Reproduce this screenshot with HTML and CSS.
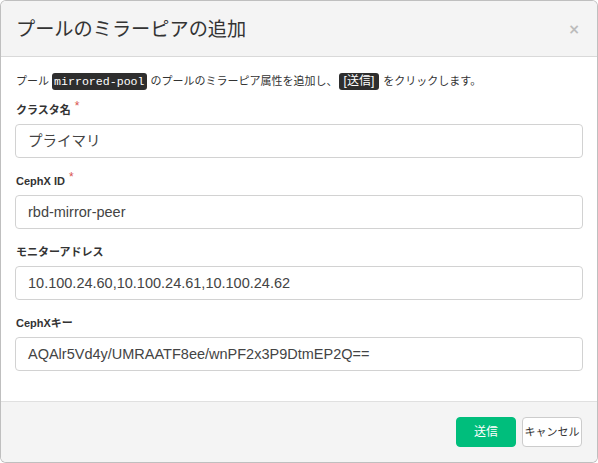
FILE: index.html
```html
<!DOCTYPE html>
<html lang="ja">
<head>
<meta charset="utf-8">
<title>プールのミラーピアの追加</title>
<link rel="stylesheet" href="styles.css">
</head>
<body>
<div class="modal">
  <div class="modal-header">
    <h4 class="modal-title">プールのミラーピアの追加</h4>
    <button class="close" type="button" aria-label="Close">×</button>
  </div>
  <div class="modal-body">
    <p class="intro">プール <kbd class="code">mirrored-pool</kbd> のプールのミラーピア属性を追加し、<kbd class="kbd">[送信]</kbd> をクリックします。</p>
    <div class="group">
      <label class="label">クラスタ名<span class="req">*</span></label>
      <div class="input">プライマリ</div>
    </div>
    <div class="group">
      <label class="label">CephX ID<span class="req">*</span></label>
      <div class="input">rbd-mirror-peer</div>
    </div>
    <div class="group">
      <label class="label">モニターアドレス</label>
      <div class="input">10.100.24.60,10.100.24.61,10.100.24.62</div>
    </div>
    <div class="group">
      <label class="label">CephXキー</label>
      <div class="input">AQAlr5Vd4y/UMRAATF8ee/wnPF2x3P9DtmEP2Q==</div>
    </div>
  </div>
  <div class="modal-footer">
    <button class="btn btn-primary" type="button">送信</button>
    <button class="btn btn-default" type="button">キャンセル</button>
  </div>
</div>
</body>
</html>
```

FILE: styles.css
```css
* { box-sizing: border-box; }
html, body { margin: 0; padding: 0; background: #fff; }
body {
  font-family: "Liberation Sans", "Noto Sans CJK JP", sans-serif;
  color: #333;
  width: 598px;
  height: 463px;
  overflow: hidden;
}
.modal {
  width: 598px;
  height: 463px;
  border: 1px solid rgba(0,0,0,0.25);
  border-radius: 6px;
  overflow: hidden;
  display: flex;
  flex-direction: column;
  background: #fff;
}
.modal-header {
  height: 56px;
  flex: none;
  background: #f4f4f4;
  border-bottom: 1px solid #d9d9d9;
  display: flex;
  align-items: center;
  justify-content: space-between;
  padding: 0 14px 0 15px;
}
.modal-title {
  margin: 0;
  font-weight: normal;
  font-size: 19.2px;
  line-height: 24px;
  color: #333;
  position: relative;
  top: 1px;
}
.close {
  border: 0;
  background: none;
  padding: 0;
  font-family: "DejaVu Sans", sans-serif;
  font-size: 14px;
  font-weight: bold;
  color: #bcbcbc;
  line-height: 14px;
  margin-right: 3px;
}
.modal-body {
  flex: none;
  padding: 15px 14px 30px 14px;
}
.intro {
  margin: 0 0 11px 1px;
  font-size: 11px;
  line-height: 18px;
  height: 18px;
  white-space: nowrap;
}
.code {
  font-family: "Liberation Mono", monospace;
  font-size: 11.6px;
  background: #2e2e2e;
  color: #fff;
  border-radius: 3px;
  padding: 2px 2px;
  margin: 0 1px 0 0;
}
.kbd {
  font-family: "Liberation Sans", "Noto Sans CJK JP", sans-serif;
  font-size: 12px;
  background: #2e2e2e;
  color: #fff;
  border-radius: 3px;
  padding: 1px 5px 2px;
  margin: 0 1px;
}
.group { margin-bottom: 14px; }
.group:last-child { margin-bottom: 0; }
.label {
  display: block;
  font-size: 11px;
  font-weight: bold;
  line-height: 18px;
  height: 18px;
  margin: 0 0 5px 1px;
  color: #333;
}
.req {
  color: #d9534f;
  font-weight: normal;
  font-size: 12px;
  margin-left: 4px;
  position: relative;
  top: -4px;
}
.input {
  height: 34px;
  border: 1px solid #d2d2d2;
  border-radius: 4px;
  padding: 0 12px;
  font-size: 14.5px;
  line-height: 32px;
  color: #444;
  background: #fff;
  white-space: nowrap;
}
.modal-footer {
  flex: 1;
  background: #f4f4f4;
  border-top: 1px solid #e0e0e0;
  display: flex;
  justify-content: flex-end;
  align-items: flex-start;
  gap: 6px;
  padding: 15px 15px 0 0;
}
.btn {
  height: 30px;
  width: 60px;
  border-radius: 4px;
  font-family: "Liberation Sans", "Noto Sans CJK JP", sans-serif;
  font-size: 12px;
  padding: 0;
  line-height: 28px;
  white-space: nowrap;
  cursor: pointer;
}
.btn-primary {
  background: #00be7c;
  border: 1px solid #00be7c;
  color: #fff;
}
.btn-default {
  background: #fff;
  border: 1px solid #cccccc;
  color: #333;
  font-size: 11px;
}
```
